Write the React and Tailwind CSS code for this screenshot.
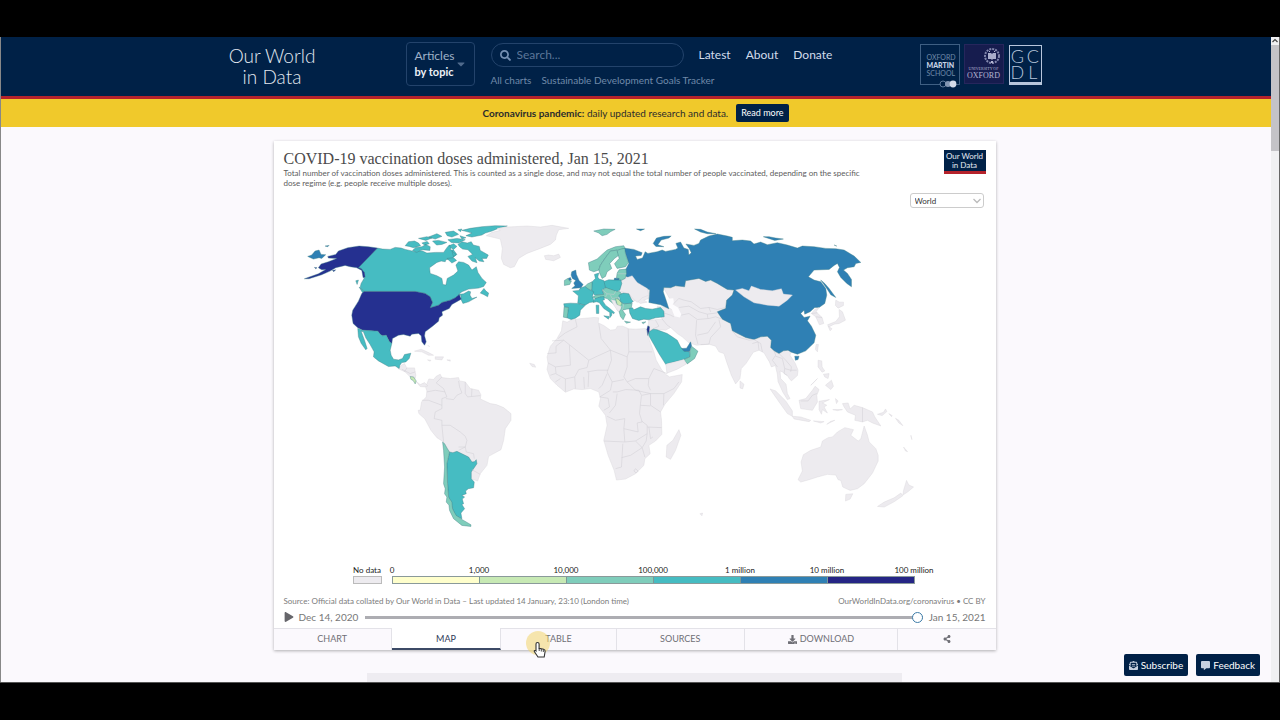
import React, { useState } from "react";
import { FaSearch, FaPlay, FaDownload, FaShareAlt, FaEnvelopeOpenText, FaCommentAlt, FaCaretDown } from "react-icons/fa";

const NONE = "#edebef";
const YELLOW = "#c7e9b4";
const GREEN = "#7fcdbb";
const TEAL = "#46bcc2";
const BLUE = "#2f80b4";
const NAVY = "#253090";

// each group has its own origin, at three units per map unit
const MAP_GROUPS = [
    {
        name: "south-america",
        origin: "390 350",
        shapes: [
            [NONE, "M130,88 138,78 150,72 155,82 180,85 205,82 208,92 225,95 240,115 265,120 272,134 270,146 300,160 318,163 340,172 362,190 362,210 345,235 340,270 332,298 295,318 290,345 270,370 262,392 243,385 200,350 160,275 140,262 122,240 104,206 86,190 84,180 90,180 94,155 108,140 110,122 106,110 116,86Z"],
            [TEAL, "M178,305 188,307 200,303 235,320 245,335 252,334 258,328 260,340 243,365 243,385 252,395 250,412 234,415 226,422 228,430 215,435 223,440 216,446 220,460 215,462 223,475 212,488 215,505 195,495 185,470 175,440 172,400 170,340Z"],
            [GREEN, "M157,275 163,280 172,296 178,305 170,340 172,400 175,440 185,455 187,476 198,495 215,507 242,523 242,528 215,525 190,505 178,480 176,464 168,455 170,440 163,430 165,415 160,400 163,350 160,300Z"],
        ],
        borders: "M110,125 135,120 165,125 M155,80 138,98 160,115 170,140 155,145 155,175 135,185 132,205 155,210 155,225 160,275 M167,145 190,148 200,135 215,128 208,110 205,92 M225,95 225,130 232,140 270,136 M245,115 244,138 M95,150 115,150 155,165 M155,225 180,225 210,245 225,258 230,270 225,290 205,300 M205,290 225,290 228,305 250,310 252,325 M245,358 270,372",
    },
    {
        name: "north-america",
        origin: "295 215",
        shapes: [
            [NONE, "M308,460 318,450 328,445 335,458 358,458 362,480 360,490 345,485 330,470Z M362,498 375,508 388,502 398,512 388,515 375,514Z"],
            [NONE, "M358,408 378,402 400,412 415,420 400,420 380,410Z M420,425 445,425 440,434 420,432Z M397,434 407,435 405,438Z M455,434 465,434 465,438Z M398,390 403,395Z"],
            [YELLOW, "M345,484 355,485 363,497 360,506 354,496 347,492Z"],
            [TEAL, "M247,99 262,102 285,103 300,97 318,99 330,103 360,110 380,107 395,114 420,112 445,112 455,98 462,90 468,92 466,105 475,105 485,118 470,130 452,134 450,140 438,138 425,142 403,158 405,175 425,182 440,190 443,208 452,210 456,190 475,180 488,168 482,150 490,140 505,142 520,150 530,165 543,155 548,172 560,190 573,202 565,214 550,219 520,222 500,230 490,238 505,236 520,228 526,230 524,240 530,250 545,246 520,260 503,265 497,252 497,240 480,248 465,255 440,262 430,270 405,278 412,262 405,245 390,235 360,229 207,229 195,217 198,205 208,188 208,175 198,160 188,158Z"],
            [TEAL, "M488,88 500,80 516,84 528,80 534,90 552,94 555,106 579,120 574,130 560,130 566,140 552,138 540,128 545,143 530,138 518,124 532,118 518,104 502,102 494,96Z"],
            [TEAL, "M500,46 525,40 560,35 600,32 636,33 612,39 590,48 570,54 560,60 530,66 512,62 530,54Z M330,92 340,80 358,78 370,84 376,92 355,98 342,94Z M352,106 362,97 380,95 392,88 405,95 404,106 380,104 365,112Z M370,70 395,65 410,69 392,76Z M400,66 425,56 440,64 420,72Z M412,78 430,76 455,82 440,88 424,90Z M450,52 475,48 490,58 470,66 456,62Z M458,74 485,70 510,74 490,84 468,82Z M462,92 475,86 485,94 474,104Z M380,84 396,79 402,86 388,90Z M470,108 482,118 475,125Z M488,44 500,42 496,50Z M494,62 512,68 500,72Z M455,130 475,128 484,136 470,144Z"],
            [TEAL, "M555,234 566,220 572,228 580,234 577,245 565,238Z M182,197 190,195 186,208Z M192,216 206,228 212,236 202,232Z"],
            [NAVY, "M247,99 220,95 192,93 158,98 130,108 122,118 98,124 100,129 125,130 100,140 78,147 70,158 80,164 92,163 70,176 28,191 42,191 80,179 105,168 122,158 138,154 150,151 165,155 185,158 200,166 204,188 210,186 208,172 198,160 190,158Z M58,157 66,158 62,161Z M112,166 122,164 116,170Z"],
            [NAVY, "M207,229 360,229 390,235 405,245 412,262 405,278 430,270 440,262 465,255 480,248 492,238 498,252 470,268 462,280 440,290 442,300 432,308 430,318 412,333 390,350 388,362 393,380 388,390 380,380 378,362 370,355 350,357 345,363 325,358 310,360 292,370 290,385 283,380 273,360 262,362 255,357 248,348 228,347 203,345 188,338 174,325 170,300 173,285 190,258 200,235Z"],
            [TEAL, "M188,340 203,345 228,347 248,348 255,357 262,362 273,360 283,380 290,385 285,405 288,420 295,432 310,434 322,430 328,418 347,414 342,430 332,440 320,442 314,450 312,460 300,452 280,454 250,437 235,425 237,410 225,388 212,368 205,350 198,348 208,375 216,400 212,404 198,384 190,365Z"],
            [BLUE, "M38,124 50,120 60,108 72,105 78,118 92,119 80,130 72,128 55,132Z M90,93 102,91 98,95Z"],
        ],
        borders: "M320,462 345,475 360,470 M335,458 328,470",
    },
    {
        name: "africa",
        origin: "535 310",
        shapes: [
            [NONE, "M82,32 95,36 110,28 140,25 175,22 190,23 188,38 205,46 225,60 240,58 246,48 262,48 280,56 300,57 330,55 336,72 342,90 355,125 362,150 378,178 390,192 402,200 440,193 438,215 415,250 388,282 375,305 378,330 379,372 360,392 340,405 344,430 328,445 325,465 300,490 270,506 243,509 236,480 218,435 205,390 215,345 210,315 190,288 195,265 190,245 165,235 140,238 115,236 90,246 65,225 45,205 35,178 38,160 35,140 45,108 65,85 78,62Z"],
            [NONE, "M392,440 394,405 412,390 430,358 436,375 420,420 405,447Z"],
        ],
        borders: "M120,28 125,50 90,68 68,85 M36,130 62,128 62,108 85,90 50,92 M85,90 160,150 185,138 225,120 197,85 190,40 M102,105 105,165 60,170 38,158 M225,120 275,140 280,125 278,56 M280,125 350,125 M275,140 275,170 265,200 275,215 300,205 340,205 355,175 395,190 M225,120 228,150 215,185 230,215 265,208 M160,150 155,172 130,178 118,200 90,206 60,190 45,195 M155,185 185,180 218,180 M158,230 160,185 M215,190 200,225 190,235 M275,215 300,240 345,250 385,250 415,235 430,215 M340,205 338,225 345,240 M345,250 345,285 375,305 M385,250 384,285 M232,245 245,245 270,238 310,240 318,255 315,280 312,310 320,335 305,338 308,365 265,355 268,325 240,330 215,318 M230,215 225,240 193,260 218,264 222,290 205,300 M245,250 240,285 222,308 M265,355 268,395 205,392 M268,395 300,392 335,370 335,345 318,332 M262,400 258,470 240,475 M258,442 285,435 320,412 300,392 M335,370 332,392 320,412 328,440 M315,285 345,287 M335,350 378,352 M340,350 345,385 352,380 M90,206 90,244 M118,200 120,235 M145,200 147,235 M60,170 62,190 M300,475 308,482 302,488 295,482Z M60,215 75,205 M320,255 345,250",
    },
    {
        name: "asia",
        origin: "620 220",
        shapes: [
            [NONE, "M130,205 165,197 192,200 195,182 235,170 345,205 380,340 450,350 455,390 475,400 490,390 512,392 508,405 524,430 532,450 530,466 512,482 505,474 500,466 485,455 478,452 480,475 496,492 500,520 508,535 500,538 486,515 472,484 470,462 464,436 452,440 446,425 430,398 415,390 398,396 376,430 362,445 358,475 345,491 332,465 318,425 310,400 295,395 285,378 265,372 228,375 205,368 185,350 170,340 150,322 135,330 110,328 88,342 80,335 85,300 125,297 118,280 110,258 148,264 155,270 150,240Z"],
            [NONE, "M0,170 20,168 38,180 45,195 70,200 88,212 85,235 70,240 80,246 60,250 45,240 30,250 10,225 0,220Z"],
            [BLUE, "M10,84 40,88 65,98 62,106 45,108 50,118 66,114 74,95 82,100 110,95 125,90 135,94 165,88 172,84 166,70 180,66 190,84 203,88 205,105 212,98 206,85 196,72 220,76 235,70 240,60 265,48 290,42 320,48 335,52 335,62 365,60 390,63 400,72 420,66 440,74 470,68 500,75 530,84 545,78 580,80 615,85 645,86 670,90 700,108 720,127 705,130 700,140 680,143 668,150 680,160 692,178 692,200 678,190 660,172 650,155 656,142 650,130 640,136 625,148 580,150 563,170 580,180 600,185 615,205 618,225 612,250 595,262 582,262 568,275 552,282 550,270 540,280 550,292 568,288 560,302 572,318 585,345 580,368 555,392 530,402 512,396 502,390 488,392 475,400 460,392 450,382 452,360 440,348 420,350 400,358 375,352 335,332 330,310 305,297 290,275 315,265 318,240 335,225 340,210 320,208 290,190 270,180 255,184 235,175 195,182 192,200 165,197 150,203 130,202 128,215 135,235 145,266 120,254 85,247 88,210 70,200 45,195 38,180 15,168 15,150 25,130 15,100Z"],
            [BLUE, "M98,70 108,54 130,49 152,48 145,54 122,60 112,74 130,80 106,79Z M222,27 240,28 260,36 286,41 260,41 240,36Z M428,50 445,50 465,54 488,57 462,61Z M600,180 612,190 625,205 645,232 630,224 618,205Z M522,408 535,408 532,418 524,420Z M48,27 72,27 60,32Z M640,75 648,78Z"],
            [NONE, "M345,210 365,205 385,212 392,198 420,208 455,212 482,206 488,222 515,225 500,240 475,258 440,255 400,248 370,230Z"],
            [NONE, "M595,262 586,275 604,292 609,310 596,314 585,290 572,280 582,268Z M645,240 656,246 668,246 668,256 652,264 644,256Z M655,268 665,275 674,300 655,310 640,312 625,320 620,314 645,304 656,290Z M622,318 634,326 628,332Z M586,373 593,373 590,395 584,388Z M358,482 370,492 366,506 358,503Z M592,420 603,422 604,440 612,452 604,456 592,440Z M608,462 625,460 622,475 612,470Z M614,495 632,480 638,498 630,508Z M570,495 590,475 574,492Z"],
            ["#fdfcfe", "M140,236 158,234 160,246 156,252 172,262 182,282 178,292 162,288 154,268 145,255Z"],
        ],
        borders: "M160,250 175,235 190,240 212,245 240,265 265,262 290,268 315,262 M175,262 205,258 235,275 260,282 290,278 M182,285 205,280 230,298 265,295 285,290 305,297 M228,300 225,345 232,372 M230,345 262,338 285,305 M240,373 265,372 270,352 300,320 295,298 M335,332 350,350 385,360 400,358 M395,370 412,365 415,390 M400,358 420,370 425,395 M128,278 150,285 160,290 M125,297 140,315 150,322 M105,300 115,318 90,330 M460,392 465,405 455,420 470,440 M475,400 495,420 512,440 510,455 M465,408 485,415 492,445 510,450 528,450 M492,445 490,460 500,466 M15,190 30,195 60,198 M0,190 20,200 M572,280 590,278 M585,290 604,292 M265,262 270,275 M260,282 262,295",
    },
    {
        name: "europe",
        origin: "490 215",
        shapes: [
            [NONE, "M-12,62 5,52 30,46 20,40 50,36 110,33 150,36 185,31 235,40 205,44 198,60 195,75 180,88 150,100 110,115 85,130 72,155 60,158 40,148 33,130 36,100 30,72Z M162,122 175,120 190,122 205,117 210,127 190,137 166,133Z M118,444 132,448 136,456 125,454Z"],
            [GREEN, "M310,48 340,42 374,43 360,50 350,58 335,62 325,54Z"],
            [NONE, "M408,188 425,182 440,202 470,220 475,240 455,248 440,262 425,248 415,235 386,228 392,208 395,195Z M370,262 385,270 390,290 380,286Z"],
            [GREEN, "M294,143 320,132 335,118 350,105 375,95 400,92 404,100 385,105 360,108 345,128 330,150 325,165 310,170 297,165Z"],
            [GREEN, "M360,108 380,105 386,120 372,130 358,145 364,160 350,170 345,184 335,190 328,175 325,165 330,150 345,128Z"],
            [GREEN, "M380,108 388,103 403,100 405,118 414,142 405,155 380,160 372,146 386,130Z"],
            [GREEN, "M386,164 407,162 408,176 404,190 392,196 378,188 380,174Z"],
            [BLUE, "M372,189 386,190 385,196 371,195Z"],
            [TEAL, "M338,200 355,194 372,195 391,195 394,205 388,225 378,230 345,218Z"],
            [TEAL, "M305,200 315,190 312,178 325,174 322,186 326,192 340,196 345,218 335,224 340,238 312,240 303,225Z"],
            [GREEN, "M283,214 292,206 305,200 304,225 294,222Z"],
            [TEAL, "M247,228 265,226 270,219 283,214 294,222 310,230 306,244 312,260 298,262 284,270 262,264 264,242Z"],
            [TEAL, "M220,266 240,264 262,265 284,271 270,285 268,300 255,309 242,313 230,308 234,277 222,276Z"],
            [GREEN, "M221,276 234,277 230,308 219,306Z"],
            [BLUE, "M244,170 256,165 258,178 266,196 278,208 272,218 244,220 254,212 250,204 256,196 246,190 242,180Z"],
            [BLUE, "M233,190 240,187 243,195 236,197Z"],
            [GREEN, "M222,196 232,190 236,197 243,198 238,208 222,211Z"],
            [GREEN, "M306,246 318,240 340,238 336,224 348,218 376,228 388,230 395,238 382,248 390,258 400,266 425,264 422,280 408,282 396,285 405,298 398,314 390,304 386,290 392,278 376,262 376,272 356,256 350,250 330,246 318,252Z"],
            [YELLOW, "M375,250 384,252 394,264 390,274 380,268Z"],
            [NONE, "M362,254 374,256 378,268 392,274 390,282 384,290 370,270Z"],
            [TEAL, "M308,262 314,250 328,246 340,244 342,254 336,256 345,270 358,280 372,292 370,296 364,292 364,300 358,308 358,292 340,280 326,262 318,260Z M340,302 356,304 354,312Z M317,270 325,270 325,295 318,295Z"],
            [TEAL, "M385,240 398,234 415,236 424,255 428,258 422,264 400,266 390,258Z"],
            [TEAL, "M416,280 426,278 430,284 450,275 465,280 485,282 510,277 520,288 521,305 495,308 475,314 460,312 445,316 426,310 418,294Z"],
            [GREEN, "M402,318 420,321 408,324Z M454,322 466,320 458,326Z"],
            [NAVY, "M469,342 472,332 477,335 476,348 472,361Z"],
            [TEAL, "M475,362 476,350 488,342 500,344 530,355 545,365 560,375 570,395 580,407 597,410 598,425 580,433 550,440 530,445 526,448 505,415 490,388Z"],
            [BLUE, "M573,400 588,399 600,380 603,392 597,409 580,408Z"],
            [GREEN, "M603,393 622,408 612,430 590,446 580,433 598,425 599,405Z"],
            [NONE, "M526,447 550,441 580,433 588,446 560,462 529,474Z"],
        ],
        borders: "M380,176 407,176 M335,224 350,236 370,238 376,228 M350,236 345,246 M360,240 365,250 382,248 M400,266 396,285",
    },
    {
        name: "oceania",
        origin: "720 340",
        shapes: [
            [NONE, "M148,146 165,152 195,182 215,212 215,228 200,220 175,185Z M215,228 240,230 270,240 265,244 220,236Z M235,180 255,175 275,150 283,138 295,148 288,165 290,185 275,210 240,205Z M295,183 326,178 305,188 318,195 310,200 320,218 305,208 302,222 295,208Z M318,252 330,243 342,240Z M278,242 310,244 300,248Z M344,175 352,182 347,190Z M336,208 365,208 350,211Z"],
            [NONE, "M365,190 382,188 388,206 400,195 425,202 455,215 462,230 480,257 455,248 440,240 425,245 402,240 404,225 380,215 370,200Z M470,222 488,216 494,206 498,214 484,226Z M504,220 514,226 512,229Z M524,234 534,240 546,256 534,248Z M548,320 560,334 554,332Z M570,285 573,298Z"],
            [NONE, "M232,418 245,392 241,365 248,343 270,330 300,320 305,302 322,292 335,290 350,275 372,262 398,268 390,285 412,302 420,296 430,257 440,285 445,305 465,325 472,345 472,362 455,398 430,430 410,445 388,450 366,440 360,420 352,418 345,404 320,402 290,410 265,418 240,425Z"],
            [NONE, "M375,462 396,460 388,476 374,482Z M557,420 564,434 578,440 560,455 546,464 548,450Z M540,458 546,466 520,484 490,500 470,498 490,485 520,472Z M-62,520 -54,518 -56,526Z"],
        ],
        borders: "M425,202 425,245 M240,182 262,182 275,165 288,160",
    },
];

const LEGEND = [
    { color: "#ffffcc", label: "0" },
    { color: "#c7e9b4", label: "1,000" },
    { color: "#7fcdbb", label: "10,000" },
    { color: "#46bcc2", label: "100,000" },
    { color: "#2f80b4", label: "1 million" },
    { color: "#252585", label: "10 million" },
];

const TABS = [
    { id: "chart", label: "CHART", size: "flex-[118]" },
    { id: "map", label: "MAP", size: "flex-[109]" },
    { id: "table", label: "TABLE", size: "flex-[115]" },
    { id: "sources", label: "SOURCES", size: "flex-[128]" },
    { id: "download", label: "DOWNLOAD", size: "flex-[153]", icon: <FaDownload size={9} /> },
    { id: "share", label: "", size: "flex-[98]", icon: <FaShareAlt size={8} /> },
];

function PartnerLogos() {
    return (
        <div className="ml-auto flex items-start gap-1 pt-[7px]">
            <a href="#martin" className="relative block h-[41px] w-10 border border-[#3f5f83] pt-2 pl-[6px] text-[7px] leading-[8px] text-[#6f89a8]">
                OXFORD<br />
                <b className="font-black text-[#c9d5e6]">MARTIN</b><br />
                SCHOOL
                <svg className="absolute right-[2px] -bottom-[4px]" width="18" height="8" viewBox="0 0 18 8">
                    <circle cx="4" cy="4" r="3" fill="#002147" stroke="#5f7a9b" />
                    <circle cx="9" cy="4" r="3" fill="#8195b2" />
                    <circle cx="14" cy="4" r="3.4" fill="#d5dbe9" />
                </svg>
            </a>
            <a href="#oxford" className="flex h-10 w-10 flex-col items-center border border-[#26265c] bg-[#161c4e] font-['Liberation_Serif',serif] text-[#b4b6d2]">
                <svg className="mt-[2px] mr-[2px] self-end" width="18" height="19" viewBox="0 0 18 19">
                    <circle cx="9" cy="9" r="7" fill="none" stroke="#8287ad" strokeWidth="2" strokeDasharray="2 1" />
                    <path d="M5 6h3l1 1 1-1h3v6h-3l-1 1-1-1H5z" fill="#a9adcb" />
                    <path d="M6 4h1v1H6zM11 4h1v1h-1zM8 14h2v2H8z" fill="#b4b6d2" />
                </svg>
                <span className="text-[4px] leading-[5px]">UNIVERSITY OF</span>
                <span className="text-[8px] leading-[10px]">OXFORD</span>
            </a>
            <a href="#gcdl" className="mt-px ml-px grid h-10 w-[33px] grid-cols-2 content-center border border-b-[3px] border-[#b7c6dc] text-center text-[18px] leading-[16px] font-light text-[#b7c6dc]">
                <span>G</span>
                <span>C</span>
                <span>D</span>
                <span>L</span>
            </a>
        </div>
    );
}

function SiteHeader() {
    return (
        <header className="border-b-[3px] border-[#b5222b] bg-[#002147] pr-[2px]">
            <div className="mx-auto flex h-[59px] max-w-[814px] items-start">
                <a href="#home" className="w-[89px] pt-[8px] text-center text-[19px] leading-[21px] font-light text-[#e3e9f1]">
                    Our World<br />in Data
                </a>
                <button className="mt-[5px] ml-[89px] flex h-11 w-[69px] items-center gap-px rounded border border-[#23436b] pl-2 text-left text-[12px] leading-[16px] text-[#9fb1c8]">
                    <span>
                        Articles<br />
                        <b className="text-[11px] text-[#eef2f7]">by topic</b>
                    </span>
                    <FaCaretDown size={12} className="-mr-1 shrink-0 text-[#4f6a8c]" />
                </button>
                <div className="ml-4 pt-[6px]">
                    <div className="flex items-center">
                        <label className="flex h-6 w-[193px] items-center gap-[6px] rounded-full border border-[#23436b] px-2">
                            <FaSearch size={11} className="shrink-0 text-[#7590b3]" />
                            <input
                                type="text"
                                aria-label="Search"
                                placeholder="Search..."
                                className="w-full bg-transparent text-[12px] text-white outline-none placeholder:text-[#5b7699]"
                            />
                        </label>
                        <nav className="ml-[15px] flex gap-[15px] text-[12px] leading-[16px] text-[#d2dceb]">
                            <a href="#latest">Latest</a>
                            <a href="#about">About</a>
                            <a href="#donate">Donate</a>
                        </nav>
                    </div>
                    <nav className="mt-[6px] flex gap-[10px] text-[10px] leading-[14px] text-[#6f89a9]">
                        <a href="#charts">All charts</a>
                        <a href="#sdg">Sustainable Development Goals Tracker</a>
                    </nav>
                </div>
                <PartnerLogos />
            </div>
        </header>
    );
}

function WorldMap() {
    return (
        <svg viewBox="284 208 701 356" className="block w-full" role="img" aria-label="World map of vaccination doses">
            {MAP_GROUPS.map((group) => (
                <g key={group.name} transform={`translate(${group.origin}) scale(0.33333)`} strokeLinejoin="round">
                    {group.shapes.map(([fill, d], i) => (
                        <path key={i} d={d} fill={fill} stroke={fill === NONE ? "#d6d3da" : "#3f7f86"} strokeWidth={fill === "#fdfcfe" ? 0 : 1.2} />
                    ))}
                    <path d={group.borders} fill="none" stroke="#cfccd3" strokeWidth="1.5" />
                </g>
            ))}
        </svg>
    );
}

function Legend() {
    return (
        <div className="flex justify-center gap-[10px] pr-[2px] text-[8px] leading-[11px] text-[#222]">
            <div className="w-[29px]">
                <div className="text-center whitespace-nowrap">No data</div>
                <div className="h-2 border border-[#bbb] bg-[#edebef]" />
            </div>
            <div className="w-[523px]">
                <div className="-mx-[43px] flex text-center">
                    {[...LEGEND.map((bin) => bin.label), "100 million"].map((label) => (
                        <span key={label} className="flex-1">{label}</span>
                    ))}
                </div>
                <div className="flex h-2 border border-[#8a9a9a]">
                    {LEGEND.map((bin) => (
                        <div key={bin.label} className="flex-1 border-r border-[#7d9796] last:border-r-0" style={{ backgroundColor: bin.color }} />
                    ))}
                </div>
            </div>
        </div>
    );
}

function ChartCard() {
    const [tab, setTab] = useState("map");
    const [day, setDay] = useState(32);

    return (
        <main className="mx-auto w-full max-w-[722px] bg-white shadow-[0_1px_3px_rgba(0,0,0,0.3)]">
            <div className="px-[10px] pt-[9px]">
                <div className="flex items-start justify-between">
                    <div>
                        <h1 className="font-['Liberation_Serif',serif] text-[16px] leading-[18px] text-[#4b4b4b]">COVID-19 vaccination doses administered, Jan 15, 2021</h1>
                        <p className="max-w-[590px] text-[8px] leading-[10px] text-[#5c5c5c]">
                            Total number of vaccination doses administered. This is counted as a single dose, and may not equal the total number of people vaccinated, depending on the specific dose regime (e.g. people receive multiple doses).
                        </p>
                    </div>
                    <a href="#home" className="h-6 w-[42px] border-b-[3px] border-[#b5222b] bg-[#002147] pt-[2px] text-center text-[8px] leading-[9px] whitespace-nowrap text-[#e6ebf3]">
                        Our World<br />in Data
                    </a>
                </div>
                <div className="relative mt-[5px] mr-[2px] ml-auto h-[15px] w-[74px]">
                    <select aria-label="Region" className="block h-full w-full appearance-none rounded-[3px] border border-[#ccc] bg-white pl-1 text-[8px] text-[#333]">
                        <option>World</option>
                        <option>Africa</option>
                        <option>Europe</option>
                    </select>
                    <svg className="pointer-events-none absolute top-[5px] right-[3px]" width="8" height="6" viewBox="0 0 8 6">
                        <path d="M0.5 1 4 4.5 7.5 1" fill="none" stroke="#bbb" strokeWidth="1.3" />
                    </svg>
                </div>
                <WorldMap />
                <Legend />
                <div className="mt-[12px] flex justify-between text-[8px] leading-[11px] text-[#7b7b7b]">
                    <span>Source: Official data collated by Our World in Data – Last updated 14 January, 23:10 (London time)</span>
                    <a href="#coronavirus">OurWorldInData.org/coronavirus • CC BY</a>
                </div>
                <div className="flex h-[21px] items-center text-[10px] text-[#777]">
                    <button aria-label="Play"><FaPlay size={10} className="text-[#66666b]" /></button>
                    <span className="ml-[5px]">Dec 14, 2020</span>
                    <input
                        type="range"
                        aria-label="Date"
                        min="0"
                        max="32"
                        value={day}
                        onChange={(e) => setDay(e.target.value)}
                        className="mr-[6px] ml-[7px] h-3 flex-1 appearance-none bg-transparent [&::-webkit-slider-runnable-track]:h-[3px] [&::-webkit-slider-runnable-track]:bg-[#adadb2] [&::-webkit-slider-thumb]:-mt-1 [&::-webkit-slider-thumb]:size-[11px] [&::-webkit-slider-thumb]:appearance-none [&::-webkit-slider-thumb]:rounded-full [&::-webkit-slider-thumb]:border [&::-webkit-slider-thumb]:border-[#3d7ca8] [&::-webkit-slider-thumb]:bg-white"
                    />
                    <span>Jan 15, 2021</span>
                </div>
            </div>
            <div className="flex h-[22px] text-[9px]">
                {TABS.map((item) => (
                    <button
                        key={item.id}
                        aria-label={item.label || "Share"}
                        onClick={() => setTab(item.id)}
                        className={`${item.size} flex items-center justify-center gap-[3px] border-r border-[#e3e2e8] last:border-r-0 ${
                            tab === item.id ? "border-b-2 border-b-[#3c4a66] bg-white pt-[2px] text-[#2f3a58]" : "border-t border-t-[#e3e2e8] bg-[#fbf9fd] text-[#6f6f76]"
                        }`}
                    >
                        {item.icon}
                        {item.label}
                    </button>
                ))}
            </div>
        </main>
    );
}

function Pointer() {
    return (
        <svg className="pointer-events-none absolute top-[593px] left-[526px]" width="26" height="30" viewBox="0 0 26 30">
            <circle cx="12" cy="13" r="12" fill="#f3d66b" fillOpacity="0.55" />
            <path d="M11.500 12.500c1.300 0 1.600.8 1.600 1.600v4.200l4.500 1c1.300.4 1.600 1 1.500 2.200l-.9 5.500h-6.200l-3.700-5.400c-.4-.9.800-1.600 1.700-.7V14c0-.9.500-1.500 1.500-1.500z" fill="#fff" stroke="#333" strokeWidth="1.100" />
            <path d="M13.200 18v3M15.300 19v2.500M17.300 19.500v2.500" stroke="#333" strokeWidth="0.900" />
        </svg>
    );
}

function App() {
    return (
        <div className="flex h-screen flex-col bg-black py-[37px] font-['Lato',sans-serif]">
            <div className="relative flex min-h-0 flex-1 overflow-hidden border-b border-[#555] bg-[#fbf9fd]">
                <div className="min-w-0 flex-1">
                    <SiteHeader />
                    <div className="flex h-7 items-center justify-center gap-[8px] bg-[#f0c92b] text-[10px] text-[#2b2b2b]">
                        <span><b>Coronavirus pandemic:</b> daily updated research and data.</span>
                        <a href="#coronavirus" className="rounded-[2px] bg-[#002147] px-[5px] text-[9px] leading-[18px] text-white">Read more</a>
                    </div>
                    <div className="pt-[14px] pr-[2px]">
                        <ChartCard />
                        <div className="mx-auto mt-[23px] h-[10px] w-full max-w-[535px] bg-[#eeecf1]" />
                    </div>
                </div>
                <div className="w-[9px] border-r border-[#666] bg-[#f0f0f2]">
                    <svg className="block" width="8" height="8" viewBox="0 0 8 8">
                        <path d="M1.500 5 4 2.500 6.500 5" fill="none" stroke="#444" strokeWidth="1.200" />
                    </svg>
                    <div className="h-[106px] bg-[#c4c3c7]" />
                </div>
                <div className="absolute inset-y-0 left-0 w-px bg-[#888]" />
                <Pointer />
                <div className="absolute right-5 bottom-[6px] flex gap-2 text-[10px] text-white">
                    <button className="flex h-[22px] items-center gap-[3px] rounded-[2px] bg-[#002147] px-[5px]">
                        <FaEnvelopeOpenText size={9} className="text-[#c6d0df]" />
                        Subscribe
                    </button>
                    <button className="flex h-[22px] items-center gap-[3px] rounded-[2px] bg-[#002147] px-[5px]">
                        <FaCommentAlt size={9} className="text-[#c6d0df]" />
                        Feedback
                    </button>
                </div>
            </div>
        </div>
    );
}

export default App;
